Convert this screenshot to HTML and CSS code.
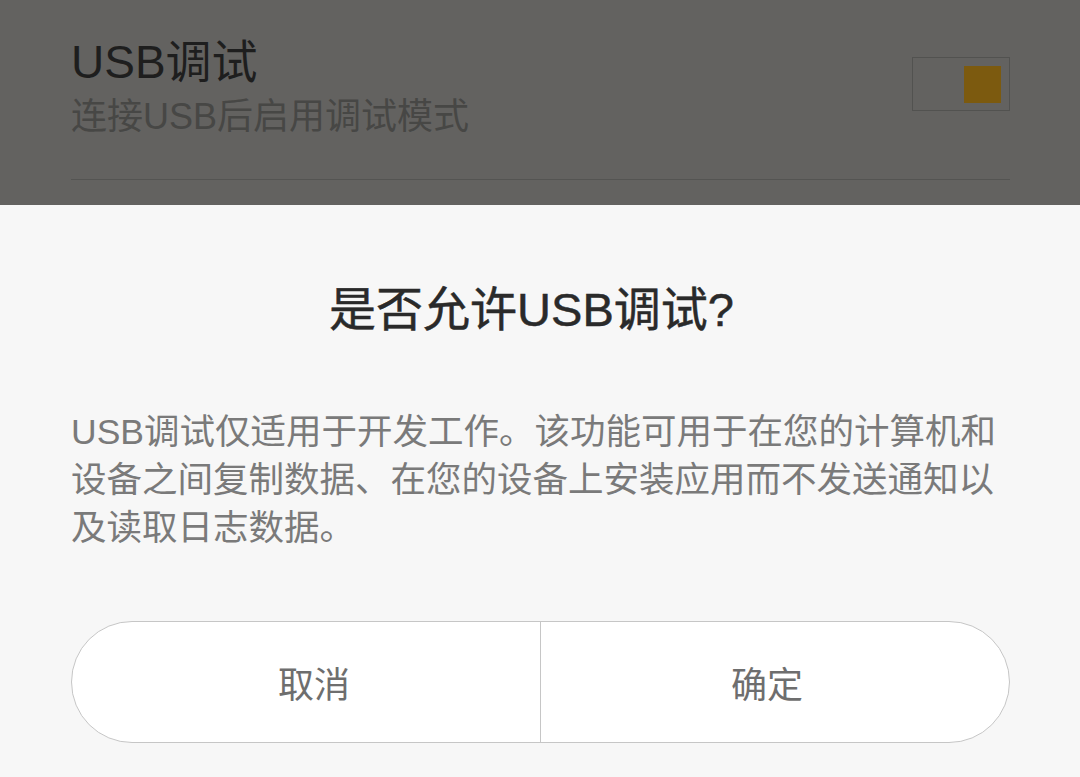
FILE: index.html
```html
<!DOCTYPE html>
<html lang="zh">
<head>
<meta charset="utf-8">
<title>USB调试</title>
<link rel="stylesheet" href="styles.css">
</head>
<body>
<div class="screen">
  <section class="settings">
    <div class="row">
      <div class="row-text">
        <div class="row-title">USB调试</div>
        <div class="row-sub">连接USB后启用调试模式</div>
      </div>
      <div class="toggle"><span class="knob"></span></div>
    </div>
  </section>
  <section class="dialog">
    <h1 class="dialog-title">是否允许USB调试?</h1>
    <p class="dialog-body">USB调试仅适用于开发工作。该功能可用于在您的计算机和<br>设备之间复制数据、在您的设备上安装应用而不发送通知以<br>及读取日志数据。</p>
    <div class="buttons">
      <button class="btn btn-left">取消</button>
      <button class="btn btn-right">确定</button>
    </div>
  </section>
</div>
</body>
</html>
```

FILE: styles.css
```css
* { box-sizing: border-box; }
html, body {
  margin: 0;
  padding: 0;
}
body {
  width: 1080px;
  height: 777px;
  overflow: hidden;
  background: #f7f7f7;
  font-family: "Liberation Sans", "Noto Sans CJK SC", sans-serif;
}
.screen {
  display: flex;
  flex-direction: column;
  height: 777px;
}
.settings {
  height: 205px;
  background: #636260;
  padding: 0 70px 0 71px;
}
.row {
  display: flex;
  justify-content: space-between;
  align-items: flex-start;
  padding-top: 34px;
  height: 180px;
  border-bottom: 1px solid #545452;
}
.row-title {
  font-size: 46px;
  line-height: 56px;
  color: #1e1e1e;
}
.row-sub {
  margin-top: 2px;
  font-size: 36px;
  line-height: 50px;
  color: #474745;
}
.toggle {
  margin-top: 23px;
  width: 98px;
  height: 54px;
  border: 1px solid #525250;
  display: flex;
  justify-content: flex-end;
  align-items: center;
  padding-right: 8px;
}
.knob {
  width: 37px;
  height: 37px;
  background: #7c5a0f;
}
.dialog {
  flex: 1;
  background: #f7f7f7;
  padding: 75px 70px 0 71px;
}
.dialog-title {
  margin: 0;
  padding-right: 18px;
  text-align: center;
  font-size: 47px;
  line-height: 60px;
  font-weight: 400;
  color: #2a2a2a;
  -webkit-text-stroke: 0.5px #2a2a2a;
}
.dialog-body {
  margin: 68px 0 0;
  font-size: 35.5px;
  line-height: 48px;
  color: #7a7a7a;
  white-space: nowrap;
}
.buttons {
  margin-top: 69px;
  display: flex;
  height: 122px;
  border: 1px solid #c6c6c6;
  border-radius: 61px;
  background: #ffffff;
  overflow: hidden;
}
.btn {
  flex: 1;
  border: 0;
  background: transparent;
  font-family: inherit;
  font-size: 36px;
  color: #6e6e6e;
  padding: 0;
}
.btn-left {
  padding-left: 16px;
}
.btn-right {
  padding-right: 16px;
  border-left: 1px solid #c6c6c6;
}
```
